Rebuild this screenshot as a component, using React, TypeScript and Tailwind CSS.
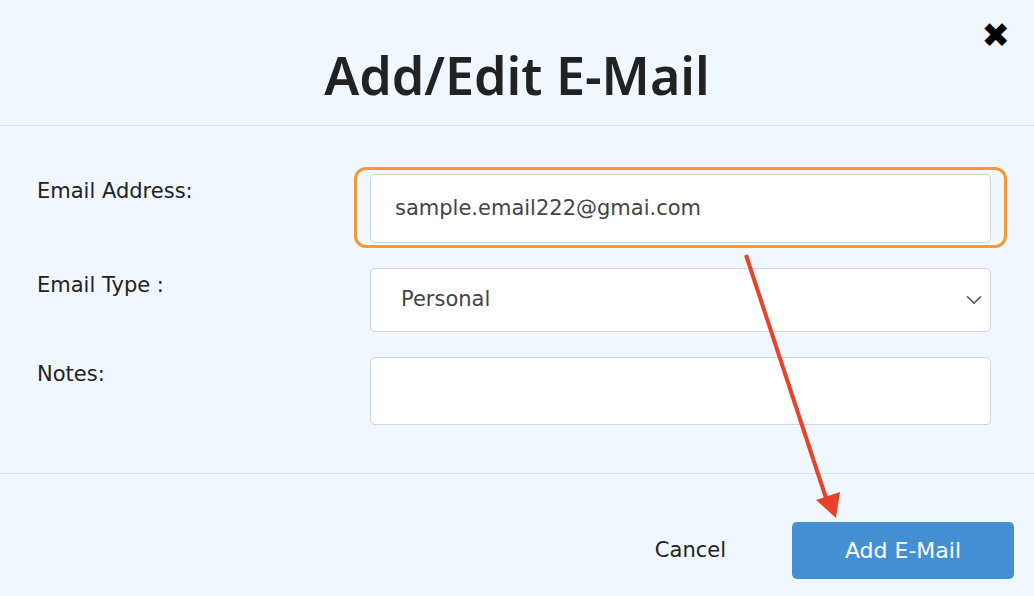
import { ChevronDown } from "lucide-react";

const rows = [
  { label: "Email Address:", kind: "email" },
  { label: "Email Type :", kind: "select" },
  { label: "Notes:", kind: "notes" },
];

export default function App() {
  return (
    <div
      className="relative w-[1034px] h-[596px] overflow-hidden bg-[#f0f7fe] text-[#222]"
      style={{ fontFamily: '"DejaVu Sans", "Noto Sans", sans-serif' }}
    >
      {/* header */}
      <div className="relative h-[126px] border-b border-[#dde3ea] flex items-center justify-center">
        <h1
          className="text-[52px] font-semibold text-[#222] mt-[25px]"
          style={{ fontFamily: '"Noto Sans", "Open Sans", sans-serif' }}
        >
          Add/Edit E-Mail
        </h1>
        <button className="absolute right-[24px] top-[18px] text-[34px] leading-none text-black">✖</button>
      </div>

      {/* form */}
      <div className="h-[348px] border-b border-[#dde3ea] pt-[48px] pl-[37px] pr-[43px] flex flex-col gap-[25px]">
        {rows.map((row) => (
          <div key={row.kind} className="flex items-start">
            <label className="w-[333px] pt-[3px] text-[21px] leading-[28px] text-[#222]">{row.label}</label>
            {row.kind === "email" && (
              <div className="relative flex-1">
                <div className="absolute -inset-x-[16px] -top-[7px] -bottom-[5px] rounded-[12px] border-[3px] border-[#f0993a]" />
                <div className="h-[69px] rounded-[5px] border border-[#cfd4d9] bg-white flex items-center pl-[24px] pt-[1px] text-[21px] text-[#444]">
                  sample.email222@gmai.com
                </div>
              </div>
            )}
            {row.kind === "select" && (
              <div className="flex-1 h-[64px] rounded-[5px] border border-[#cfd4d9] bg-white flex items-center justify-between pl-[30px] pr-[3px] text-[21px] text-[#444]">
                <span>Personal</span>
                <ChevronDown className="w-[26px] h-[26px] text-[#555]" strokeWidth={1.5} />
              </div>
            )}
            {row.kind === "notes" && (
              <div className="flex-1 h-[68px] rounded-[5px] border border-[#cfd4d9] bg-white" />
            )}
          </div>
        ))}
      </div>

      {/* footer */}
      <div className="flex items-center justify-end pt-[48px] pr-[20px] gap-[66px]">
        <button className="text-[21px] text-[#222]">Cancel</button>
        <button className="w-[222px] h-[57px] rounded-[5px] bg-[#448fd3] text-white text-[22px]">Add E-Mail</button>
      </div>

      {/* annotation arrow */}
      <svg className="absolute left-0 top-0 pointer-events-none" width="1034" height="596">
        <line x1="746" y1="255" x2="826" y2="498" stroke="#e8422a" strokeWidth="4" />
        <polygon points="816,500 840,492 836,518" fill="#e8422a" />
      </svg>
    </div>
  );
}
